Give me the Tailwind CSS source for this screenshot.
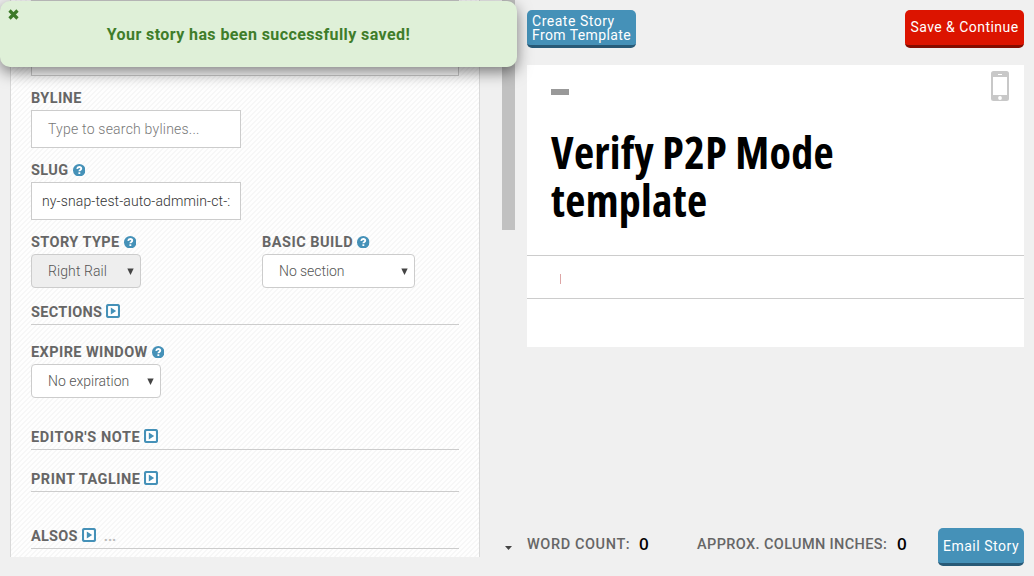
<!DOCTYPE html>
<html lang="en">
<head>
<meta charset="utf-8">
<title>Story editor</title>
<script src="https://cdn.jsdelivr.net/npm/@tailwindcss/browser@4"></script>
</head>
<body class="bg-[#f0f0f0] font-['Roboto',sans-serif]">
<svg class="hidden">
  <symbol id="help" viewBox="0 0 12 12"><circle cx="6" cy="6" r="6" fill="#4591b8"/><path d="M4 4.6C4.2 3.3 5 2.9 6 2.9c1.1 0 1.9.6 1.9 1.6C7.9 5.7 6.1 5.7 6.1 7M6.1 8v1.6" fill="none" stroke="#fff" stroke-width="1.8"/></symbol>
  <symbol id="play" viewBox="0 0 14 14"><rect x="1" y="1" width="12" height="12" rx="1.5" fill="#fff" stroke="#4591b8" stroke-width="2.1"/><path d="M4.8 3.4v7.2L10.2 7z" fill="#4591b8"/></symbol>
  <symbol id="arrow" viewBox="0 0 7 7"><path d="M0.3 0.5h6.4L3.5 7z" fill="#444"/></symbol>
</svg>
<div class="flex h-[576px] w-[1034px] overflow-hidden bg-[#f0f0f0]">
  <div class="flex w-[527px] pl-2.5">
    <section class="flex h-[557px] w-[470px] flex-col border-x border-[#d9d9d9] bg-[#fcfcfc] bg-[linear-gradient(135deg,#f7f7f7_12.5%,#fefefe_12.5%,#fefefe_50%,#f7f7f7_50%,#f7f7f7_62.5%,#fefefe_62.5%)] bg-size-[5px_5px] px-5 text-[14.5px] font-bold leading-[26px] tracking-[0.42px] text-[#666]">
      <div class="h-[76px] shrink-0 border border-[#ccc] bg-white"></div>
      <div class="mt-2.5 flex h-6 shrink-0">BYLINE</div>
      <div class="flex h-[38px] w-[210px] shrink-0 items-center border border-[#ccc] bg-white pl-4 text-[14px] font-light tracking-[0.22px] text-[#777]">Type to search bylines...</div>
      <div class="mt-2.5 flex h-6 shrink-0 items-center gap-1"><span class="pt-0.5">SLUG</span><svg class="size-[12.5px]"><use href="#help"/></svg></div>
      <div class="flex h-[38px] w-[210px] shrink-0 items-center border border-[#ccc] bg-white px-2.5 text-[14px] font-light tracking-[0.12px] text-[#333]"><span class="w-[188px] overflow-hidden whitespace-nowrap">ny-snap-test-auto-admmin-ct-:</span></div>
      <div class="mt-2.5 flex shrink-0">
        <div class="w-[231px]">
          <div class="flex h-6 items-center gap-1"><span class="pt-0.5">STORY TYPE</span><svg class="size-[12.5px]"><use href="#help"/></svg></div>
          <div class="flex h-[34px] w-[110px] items-center justify-between rounded border border-[#ccc] bg-[#eee] pl-4 pr-1.5 text-[14px] font-light tracking-[0.1px] text-[#555]"><span>Right Rail</span><svg class="size-[7px]"><use href="#arrow"/></svg></div>
        </div>
        <div>
          <div class="flex h-6 items-center gap-1"><span class="pt-0.5 tracking-[0.5px]">BASIC BUILD</span><svg class="size-[12.5px]"><use href="#help"/></svg></div>
          <div class="flex h-[34px] w-[153px] items-center justify-between rounded border border-[#ccc] bg-white pl-4 pr-1.5 text-[14px] font-light tracking-[-0.05px] text-[#555]"><span>No section</span><svg class="size-[7px]"><use href="#arrow"/></svg></div>
        </div>
      </div>
      <div class="mt-3 flex h-[25px] shrink-0 items-center gap-[3px] border-b border-[#ccc]"><span class="pt-0.5 tracking-[0.32px]">SECTIONS</span><svg class="mb-0.5 ml-px size-3.5"><use href="#play"/></svg></div>
      <div class="mt-[15px] flex h-6 shrink-0 items-center gap-1"><span class="pt-0.5">EXPIRE WINDOW</span><svg class="size-[12.5px]"><use href="#help"/></svg></div>
      <div class="flex h-[34px] w-[130px] shrink-0 items-center justify-between rounded border border-[#ccc] bg-white pl-4 pr-1.5 text-[14px] font-light tracking-normal text-[#555]"><span>No expiration</span><svg class="size-[7px]"><use href="#arrow"/></svg></div>
      <div class="mt-[27px] flex h-[25px] shrink-0 items-center gap-[3px] border-b border-[#ccc]"><span class="pt-0.5 tracking-[0.6px]">EDITOR'S NOTE</span><svg class="mb-0.5 ml-px size-3.5"><use href="#play"/></svg></div>
      <div class="mt-[17px] flex h-[25px] shrink-0 items-center gap-[3px] border-b border-[#ccc]"><span class="pt-0.5 tracking-[0.5px]">PRINT TAGLINE</span><svg class="mb-0.5 ml-px size-3.5"><use href="#play"/></svg></div>
      <div class="mt-8 flex h-[25px] shrink-0 items-center gap-[3px] border-b border-[#ccc]"><span class="pt-0.5 tracking-[0.25px]">ALSOS</span><svg class="mb-0.5 ml-px size-3.5"><use href="#play"/></svg><span class="ml-[5px] pt-0.5 tracking-normal text-[#bbb]">...</span></div>
    </section>
    <div class="ml-[22px] h-[230px] w-[13px] bg-[#c1c1c1]"></div>
    <svg class="-ml-[10px] mt-[546px] h-1 w-[7px]" viewBox="0 0 7 4"><path d="M0 0h7L3.5 4z" fill="#444"/></svg>
  </div>
  <main class="flex w-[497px] flex-col">
    <header class="flex h-[65px] items-start justify-between pt-2.5 text-[14px] text-white">
      <div class="h-[38px] w-[109px] whitespace-nowrap rounded-[5px] border-b-[3px] border-[#285a77] bg-[#4591b8] pl-[5px] pt-1 leading-[14px]"><span class="tracking-[0.52px]">Create Story</span><br><span class="tracking-[0.4px]">From Template</span></div>
      <div class="flex h-[38px] w-[119px] items-center justify-center rounded-[5px] border-b-[3px] border-[#840c00] bg-[#dc1400] tracking-[0.46px]">Save &amp; Continue</div>
    </header>
    <article class="h-[282px] bg-white">
      <div class="flex h-[191px] justify-between border-b border-[#ccc] pl-6 pr-[15px]">
        <div>
          <div class="mt-6 h-1.5 w-[18px] bg-[#999]"></div>
          <h1 class="mt-[33px] whitespace-nowrap font-['Open_Sans',sans-serif] text-[44px] font-bold leading-[48px] tracking-[0.3px] text-black [font-stretch:75%]">Verify P2P Mode<br>template</h1>
        </div>
        <svg class="mt-1.5 h-[30px] w-[18px]" viewBox="0 0 18 30"><rect width="18" height="30" rx="2.5" fill="#c8c8c8"/><path d="M2 6h14v18H2zM7 3h4v1H7z" fill="#fff"/><circle cx="9" cy="27" r="1.9" fill="#fff"/></svg>
      </div>
      <div class="h-[43px] border-b border-[#ccc] pl-[33px] pt-[18px]"><div class="h-2.5 w-px bg-[#dda5a5]"></div></div>
    </article>
    <footer class="mt-[181px] flex h-[38px] text-[14.5px] font-medium leading-8 text-[#666]">
      <div class="w-28 pt-px tracking-[0.6px]">WORD COUNT:</div>
      <b class="w-[58px] font-['Open_Sans',sans-serif] text-[17px] font-semibold text-black">0</b>
      <div class="w-[200px] whitespace-nowrap pt-px tracking-[0.38px]">APPROX. COLUMN INCHES:</div>
      <b class="font-['Open_Sans',sans-serif] text-[17px] font-semibold text-black">0</b>
      <div class="ml-auto flex h-[38px] w-[86px] items-center justify-center rounded-[5px] border-b-[3px] border-[#285a77] bg-[#4591b8] text-[14px] font-normal tracking-[0.52px] text-white">Email Story</div>
    </footer>
  </main>
</div>
<div class="absolute left-0 top-px h-[66px] w-[517px] rounded-[10px] bg-[#dff0d8] shadow-[0_5px_15px_rgba(0,0,0,0.5)]">
  <svg class="absolute left-[8px] top-[8px] size-[11px]" viewBox="0 0 11 11"><path d="M1.5 1.5l8 8M9.5 1.5l-8 8" stroke="#3c7a28" stroke-width="3.2"/></svg>
  <p class="pt-[22px] text-center text-[16px] font-bold leading-6 tracking-[0.41px] text-[#3f7d2a]">Your story has been successfully saved!</p>
</div>
</body>
</html>
